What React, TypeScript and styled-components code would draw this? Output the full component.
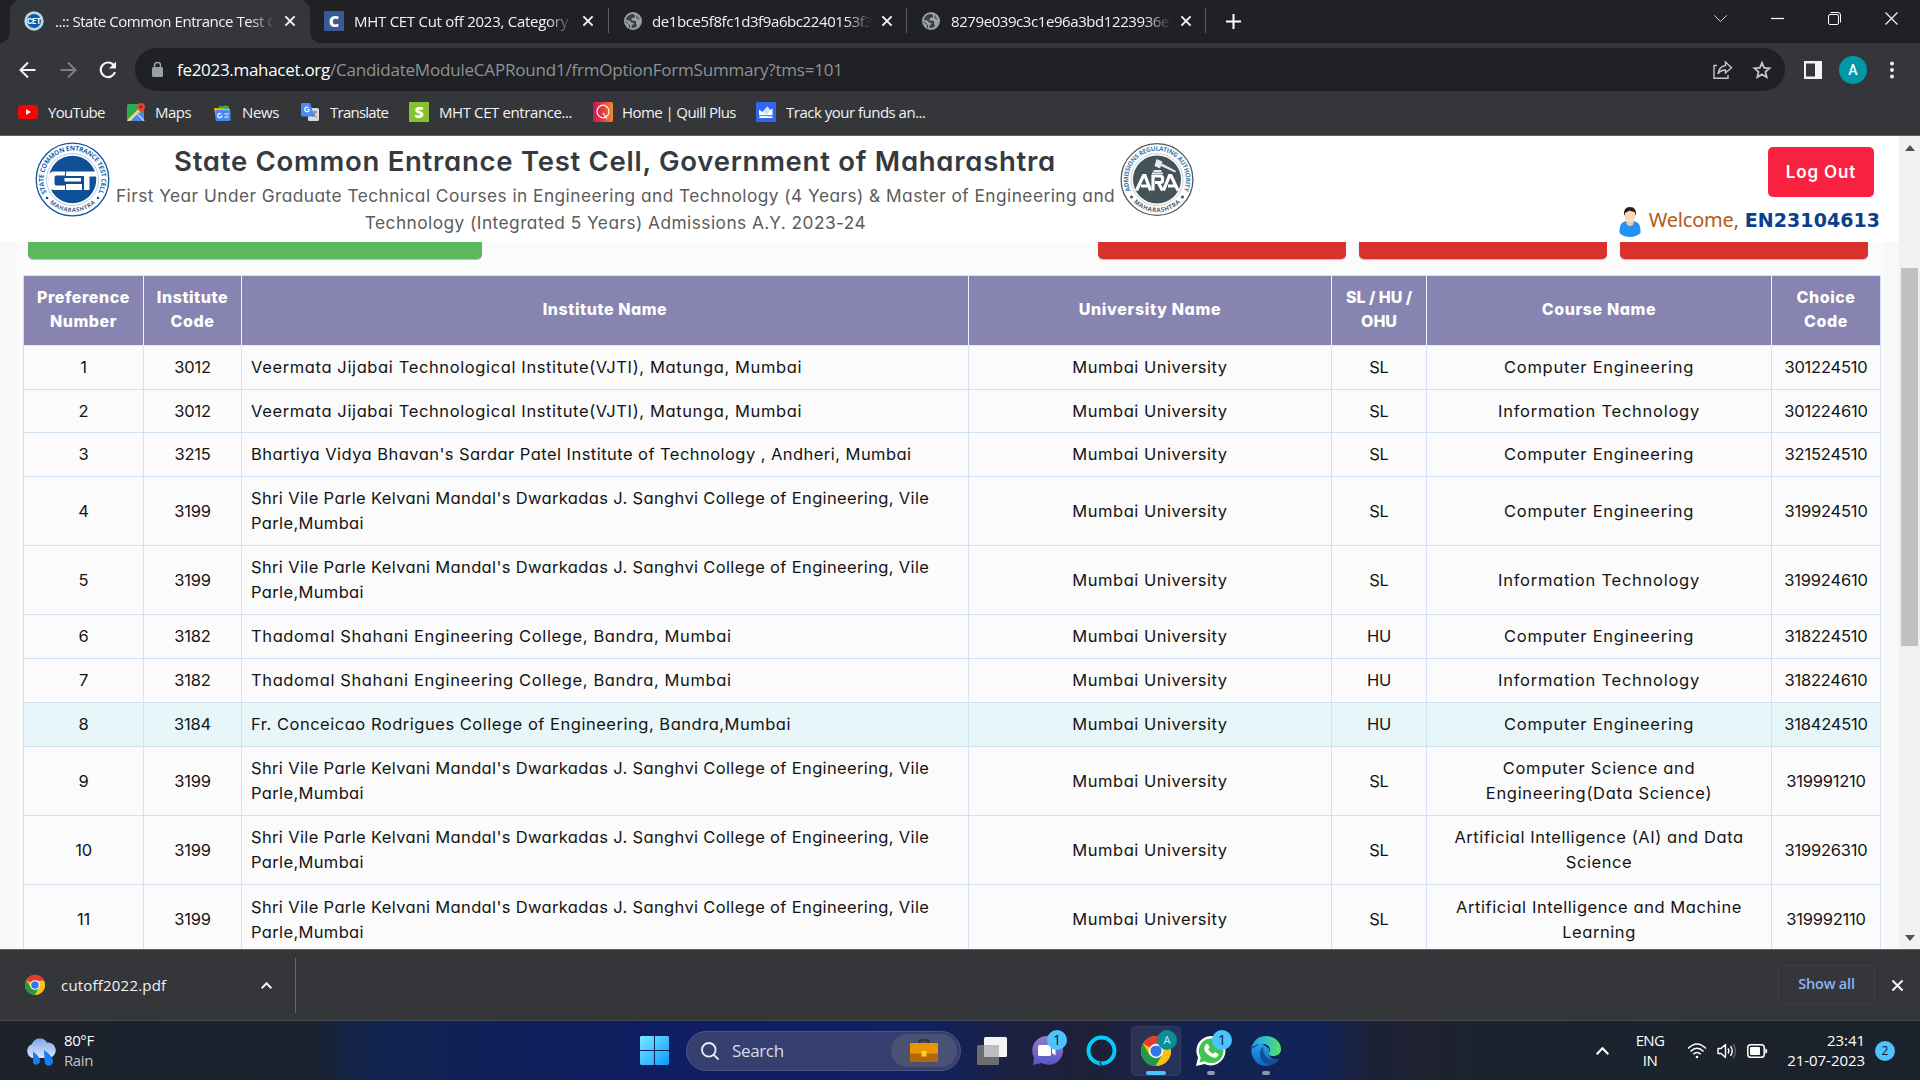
import React from 'react';
import styled, { createGlobalStyle } from 'styled-components';

const UI = '"Open Sans", "Noto Sans", sans-serif';
const PAGE = 'Inter, "Open Sans", sans-serif';

const Global = createGlobalStyle`
  * { box-sizing: border-box; }
  html, body { margin: 0; padding: 0; overflow: hidden; background: #202124; }
  svg { display: block; flex: none; overflow: visible; }
`;

const Screen = styled.div`
  width: 1920px;
  height: 1080px;
  display: flex;
  flex-direction: column;
  overflow: hidden;
  font-family: ${UI};
`;

/* ---------- browser chrome ---------- */

const TabStrip = styled.div`
  height: 43px;
  flex: none;
  display: flex;
  align-items: stretch;
  background: #202124;
  padding-left: 10px;
`;

const Tab = styled.div<{ $active?: boolean; $width: number; $pad: number }>`
  width: ${p => p.$width}px;
  display: flex;
  align-items: center;
  padding: 0 0 2px ${p => p.$pad}px;
  background: ${p => (p.$active ? '#35363a' : 'transparent')};
  border-radius: 10px 10px 0 0;
  position: relative;
`;

const TabFoot = styled.i<{ $side: 'left' | 'right' }>`
  position: absolute;
  bottom: 0;
  ${p => p.$side}: -10px;
  width: 10px;
  height: 10px;
  background: radial-gradient(circle at ${p => (p.$side === 'left' ? '0 0' : '100% 0')}, transparent 9.5px, #35363a 10px);
`;

const TabTitle = styled.span<{ $width: number; $gap: number; $ls: number }>`
  width: ${p => p.$width}px;
  margin-left: ${p => p.$gap}px;
  margin-right: 10px;
  font-size: 15px;
  line-height: 24px;
  letter-spacing: ${p => p.$ls}px;
  color: #f1f3f4;
  white-space: nowrap;
  overflow: hidden;
  mask-image: linear-gradient(90deg, #000 calc(100% - 26px), transparent);
`;

const TabDivider = styled.span<{ $gap: number }>`
  width: 1px;
  height: 25px;
  margin-left: ${p => p.$gap}px;
  background: #5b5d61;
`;

const LetterIcon = styled.span<{ $bg: string; $size: number }>`
  width: ${p => p.$size}px;
  height: 20px;
  flex: none;
  display: flex;
  align-items: center;
  justify-content: center;
  background: ${p => p.$bg};
  color: #fff;
  font-size: 16px;
  font-weight: 800;
  line-height: 20px;
`;

const NewTab = styled.div`
  display: flex;
  align-items: center;
  padding-left: 20px;
`;

const WindowControls = styled.div`
  margin-left: auto;
  display: flex;
  height: 37px;
  align-items: center;
  gap: 44px;
  padding-right: 22px;
`;

const Toolbar = styled.div`
  height: 53px;
  flex: none;
  display: flex;
  align-items: center;
  background: #35363a;
  padding: 0 24px 0 18px;
`;

const NavButtons = styled.div`
  display: flex;
  gap: 20px;
  width: 117px;
`;

const Omnibox = styled.div`
  width: 1650px;
  height: 43px;
  display: flex;
  align-items: center;
  border-radius: 22px;
  background: #202124;
  padding: 0 14px 0 17px;
`;

const Url = styled.div`
  margin-left: 14px;
  font-size: 17px;
  line-height: 26px;
  letter-spacing: -0.2px;
  color: #8f9194;
  white-space: nowrap;
  b { font-weight: 400; color: #fff; letter-spacing: -0.3px; }
`;

const OmniActions = styled.div`
  margin-left: auto;
  display: flex;
  align-items: center;
  gap: 20px;
`;

const ToolbarEnd = styled.div`
  margin-left: 19px;
  display: flex;
  align-items: center;
`;

const Avatar = styled.div`
  width: 28px;
  height: 28px;
  margin: 0 23px 0 17px;
  border-radius: 50%;
  background: #0097a7;
  color: #fff;
  font: 500 14px/28px Roboto, sans-serif;
  text-align: center;
`;

const Bookmarks = styled.div`
  height: 40px;
  flex: none;
  display: flex;
  align-items: center;
  background: #35363a;
  border-bottom: 1px solid #5d5b60;
  padding: 0 0 7px 18px;
`;

const Bookmark = styled.div<{ $width: number; $gap: number; $ls: number }>`
  width: ${p => p.$width}px;
  display: flex;
  align-items: center;
  gap: ${p => p.$gap}px;
  font-size: 15px;
  line-height: 22px;
  letter-spacing: ${p => p.$ls}px;
  color: #f1f3f4;
  white-space: nowrap;
`;

/* ---------- web page ---------- */

const Viewport = styled.div`
  height: 813px;
  flex: none;
  display: flex;
  overflow: hidden;
  background: #f8f8f8;
`;

const Page = styled.div`
  width: 1899px;
  display: flex;
  flex-direction: column;
  font-family: ${PAGE};
  font-feature-settings: 'cv11';
`;

const SiteHeader = styled.header`
  height: 106px;
  flex: none;
  display: flex;
  align-items: flex-start;
  background: #fff;
  padding: 6px 19px 0 35px;
`;

const Headings = styled.div`
  width: 1010px;
  display: flex;
  flex-direction: column;
  align-items: center;
  white-space: nowrap;
`;

const SiteTitle = styled.h1`
  margin: 2px 0 3px;
  font-size: 27.5px;
  line-height: 35px;
  font-weight: 600;
  letter-spacing: 0.73px;
  color: #343a40;
`;

const Subtitle = styled.div<{ $ls: number }>`
  padding-left: 1px;
  font-size: 17.3px;
  line-height: 27px;
  letter-spacing: ${p => p.$ls}px;
  color: #5b5b5b;
`;

const Account = styled.div`
  margin-left: auto;
  display: flex;
  flex-direction: column;
  align-items: flex-end;
`;

const LogOut = styled.button`
  width: 106px;
  height: 50px;
  margin: 5px 6px 0 0;
  padding: 0;
  border: 0;
  border-radius: 5px;
  background: #f8213f;
  color: #fff;
  font: 600 17px/50px ${PAGE};
  font-feature-settings: 'cv11';
  letter-spacing: 0.85px;
`;

const Welcome = styled.div`
  display: flex;
  align-items: center;
  margin-top: 9px;
  height: 32px;
  font-family: "DejaVu Sans", sans-serif;
`;

const WelcomeText = styled.span`
  margin: 0 6px 4px 8px;
  font: 400 20px/28px "Noto Sans", sans-serif;
  letter-spacing: -0.2px;
  color: #b5591a;
`;

const UserId = styled.b`
  margin-bottom: 4px;
  font-size: 19px;
  line-height: 28px;
  letter-spacing: 0.05px;
  color: #0b3f8c;
`;

const Content = styled.main`
  height: 707px;
  margin: 0 15px 0 17px;
  padding: 0 3px 0 6px;
  background: #fbfbfb;
  overflow: hidden;
`;

const Actions = styled.div`
  display: flex;
  height: 33px;
  padding: 0 13px 0 5px;
  gap: 13px;
`;

const Action = styled.div<{ $color: string; $width: number; $push?: boolean }>`
  width: ${p => p.$width}px;
  height: 17px;
  margin-left: ${p => (p.$push ? 'auto' : '0')};
  background: ${p => p.$color};
  border-radius: 0 0 5px 5px;
  box-shadow: 0 1px 1px rgba(90, 100, 150, 0.45);
`;

const Table = styled.div`
  width: 1858px;
  border-left: 1px solid #cde0f1;
  border-top: 1px solid #cde6ee;
`;

const Row = styled.div<{ $height: number; $hover?: boolean }>`
  display: grid;
  grid-template-columns: 120px 98px 727px 363px 95px 345px 109px;
  height: ${p => p.$height}px;
  background: ${p => (p.$hover ? '#e7f7f9' : 'transparent')};
`;

const Cell = styled.div<{ $left?: boolean; $ls?: number }>`
  display: flex;
  align-items: center;
  justify-content: ${p => (p.$left ? 'flex-start' : 'center')};
  text-align: ${p => (p.$left ? 'left' : 'center')};
  padding: 0 ${p => (p.$left ? 9 : 0)}px;
  border-right: 1px solid #d3e3f3;
  border-bottom: 1px solid #cfe0f0;
  font-size: 16.5px;
  line-height: 25px;
  letter-spacing: ${p => p.$ls ?? 0.52}px;
  color: #141414;
  white-space: pre-line;
`;

const HeadCell = styled(Cell)`
  background: #8884b2;
  border-right-color: #eef1fa;
  border-bottom-color: #e6ecf6;
  color: #fff;
  font-size: 16px;
  font-weight: 800;
  line-height: 24px;
  padding-bottom: 3px;
  &:last-child { border-right-color: #cde0f1; }
`;

const ScrollBar = styled.div`
  width: 21px;
  display: flex;
  flex-direction: column;
  align-items: center;
  background: #f1f1f1;
  padding: 9px 0 8px;
`;

const Thumb = styled.div`
  width: 17px;
  height: 378px;
  margin: 117px 0 auto;
  background: #c1c1c1;
`;

const Arrow = styled.i<{ $up?: boolean }>`
  border: 5px solid transparent;
  border-top-width: ${p => (p.$up ? 0 : 6)}px;
  border-bottom-width: ${p => (p.$up ? 6 : 0)}px;
  border-${p => (p.$up ? 'bottom' : 'top')}-color: #505050;
`;

/* ---------- downloads and taskbar ---------- */

const Downloads = styled.div`
  height: 72px;
  flex: none;
  display: flex;
  align-items: center;
  background: #35363a;
  border-top: 1px solid #5f6064;
  border-bottom: 1px solid #46484e;
  padding: 0 17px 0 25px;
`;

const FileName = styled.span`
  width: 200px;
  margin-left: 16px;
  font-size: 15px;
  letter-spacing: 0.2px;
  color: #f1f3f4;
`;

const DownloadDivider = styled.span`
  width: 1px;
  height: 55px;
  margin-left: 23px;
  background: #68696d;
`;

const ShowAll = styled.button`
  width: 97px;
  height: 39px;
  margin: 0 17px 2px auto;
  padding: 0;
  border: 1px solid #3f4044;
  border-radius: 5px;
  background: transparent;
  color: #8ab4f8;
  font: 600 14.5px/36px ${UI};
  letter-spacing: -0.2px;
`;

const Taskbar = styled.div`
  height: 59px;
  flex: none;
  display: flex;
  align-items: center;
  background: linear-gradient(90deg, #1e222b 0, #1a2330 310px, #12244f 370px, #101e5c 540px, #0f1d63 700px,
    #112160 930px, #1c2142 1010px, #1f2038 1090px, #14224f 1180px, #10245a 1310px, #1d2138 1375px, #1f2230 1430px,
    #1a232e 1510px, #1c222b 1920px);
  padding: 0 25px 0 25px;
  color: #fff;
`;

const Weather = styled.div`
  width: 576px;
  margin: 0 0 2px 8px;
  font-size: 15px;
  line-height: 20px;
  letter-spacing: -0.4px;
  span { display: block; color: #c3c6ca; }
`;

const SearchBox = styled.div`
  width: 275px;
  height: 40px;
  margin: 0 16px 0 17px;
  display: flex;
  align-items: center;
  border-radius: 20px;
  background: #353f70;
  border: 1px solid #4b5482;
  padding: 0 3px 0 14px;
  font-size: 17px;
  letter-spacing: -0.35px;
  color: #d9dce6;
`;

const SearchLabel = styled.span`
  margin-left: 13px;
`;

const SearchHighlight = styled.span`
  width: 66px;
  height: 33px;
  margin-left: auto;
  display: flex;
  align-items: center;
  justify-content: center;
  border-radius: 17px;
  background: #4b5173;
`;

const AppSlot = styled.div<{ $open?: boolean }>`
  position: relative;
  width: 50px;
  height: 50px;
  margin-right: 5px;
  flex: none;
  display: flex;
  align-items: center;
  justify-content: center;
  border-radius: 5px;
  background: ${p => (p.$open ? 'rgba(255,255,255,0.08)' : 'transparent')};
  box-shadow: ${p => (p.$open ? 'inset 0 0 0 1px rgba(255,255,255,0.05)' : 'none')};
`;

const Badge = styled.span<{ $bg?: string; $fg?: string }>`
  position: absolute;
  left: 26px;
  top: 4px;
  width: 20px;
  height: 20px;
  border-radius: 50%;
  background: ${p => p.$bg || '#4cc2ff'};
  color: ${p => p.$fg || '#101820'};
  font-size: ${p => (p.$bg ? 11 : 14)}px;
  line-height: 20px;
  text-align: center;
`;

const Running = styled.span<{ $on?: boolean }>`
  position: absolute;
  bottom: 1px;
  width: ${p => (p.$on ? 20 : 8)}px;
  height: 4px;
  border-radius: 2px;
  background: ${p => (p.$on ? '#4cc2ff' : '#9297ab')};
`;

const Tray = styled.div`
  margin-left: auto;
  display: flex;
  align-items: center;
  font-size: 15px;
  line-height: 20px;
`;

const Language = styled.div`
  width: 42px;
  margin: 0 16px 2px 20px;
  text-align: center;
  letter-spacing: -0.6px;
`;

const Clock = styled.div`
  width: 80px;
  margin: 0 10px 2px 17px;
  text-align: right;
  letter-spacing: -0.05px;
  white-space: nowrap;
`;

const Notices = styled.div`
  width: 20px;
  height: 20px;
  border-radius: 50%;
  background: #4cc2ff;
  color: #101820;
  font-size: 12px;
  text-align: center;
`;

/* ---------- drawings ---------- */

const Cross = ({ size = 10, w = 2, color = '#f1f3f4' }: { size?: number; w?: number; color?: string }) => (
  <svg width={size} height={size} viewBox="0 0 10 10" stroke={color} strokeWidth={(w * 10) / size}>
    <path d="M.4.4l9.2 9.2M9.6.4L.4 9.6" />
  </svg>
);

const Globe = () => (
  <svg width="18" height="18" viewBox="0 0 18 18">
    <circle cx="9" cy="9" r="9" fill="#9aa0a6" />
    <path d="M7 2.2C4 3 2.300 5.500 2 8l3.500.5 2 2.200H9.500v1.500L7.500 13.500v2.300C10 16.200 11.500 15.500 13 14l-1-2.500V9L8.500 8.800 7 7l2-1.500h2V3.500L9.500 2z" fill="#3b3d40" />
    <path d="M1.500 9.500l4 3.500v3M13 3.500V6l2.500 1" stroke="#3b3d40" fill="none" />
  </svg>
);

const Chrome = ({ size }: { size: number }) => (
  <svg width={size} height={size} viewBox="0 0 48 48">
    <circle cx="24" cy="24" r="24" fill="#fbc116" />
    <path d="M24 24L3.200 12A24 24 0 0 1 44.800 12z" fill="#e33b2e" />
    <path d="M3.200 12A24 24 0 0 0 24 48l10.400-18H24L13.600 30z" fill="#23994a" />
    <path d="M24 13h21.300A24 24 0 0 1 24 48l9.500-18.500z" fill="#fbc116" />
    <path d="M24 13h21.300L44.800 12 24 11z" fill="#e33b2e" />
    <circle cx="24" cy="24" r="11.500" fill="#fff" />
    <circle cx="24" cy="24" r="9" fill="#3476e8" />
  </svg>
);

const MiniSeal = () => (
  <svg width="20" height="20" viewBox="0 0 20 20">
    <circle cx="10" cy="10" r="9.700" fill="#b7d7ef" />
    <circle cx="10" cy="10" r="7" fill="#1259a4" />
    <text x="10" y="12.600" textAnchor="middle" fontSize="7" fontWeight="800" fill="#fff" fontFamily="Inter">CET</text>
  </svg>
);

const CetSeal = () => (
  <svg width="75" height="75" viewBox="-37.500 -37.500 75 75">
    <circle r="36.300" fill="#fff" stroke="#11539f" strokeWidth="1.300" />
    <circle r="26" fill="none" stroke="#8fb4dc" strokeWidth=".7" />
    <circle r="23.800" fill="#0f4f98" />
    <path id="cetTop" d="M-24.500 15.500A29 29 0 1 1 24.500 15.500" fill="none" />
    <path id="cetBottom" d="M-27.500 17.800A33 33 0 0 0 27.500 17.800" fill="none" />
    <g fontFamily='"Open Sans"' fontWeight="700" fill="#1166b5">
      <text fontSize="6.600"><textPath href="#cetTop" startOffset="50%" textAnchor="middle" textLength="118">STATE COMMON ENTRANCE TEST CELL</textPath></text>
      <text fontSize="5.800" fill="#44658f"><textPath href="#cetBottom" startOffset="50%" textAnchor="middle" textLength="50">MAHARASHTRA</textPath></text>
    </g>
    <circle cx="-25.500" cy="18.500" r="1.300" fill="#11539f" />
    <circle cx="25.500" cy="18.500" r="1.300" fill="#11539f" />
    <g fill="#fff">
      <path d="M-7.500-8v4h-8.500q-2 0-2 2v6q0 2 2 2h8.500v4.500h-10.500q-6 0-6-5.500v-7.500q0-5.500 6-5.500z" />
      <path d="M-6.500-8H24v5h-7v13.500h-5.500V-3.500H-6.500z" />
      <path d="M-8-1.500H8.500v3.500H-8zM-6.500 4.500H9.500v6H-6.500z" />
    </g>
  </svg>
);

const AraSeal = () => (
  <svg width="74" height="75" viewBox="-37 -37.500 74 75">
    <circle r="35.900" fill="#fff" stroke="#4a5960" strokeWidth="1.300" />
    <circle r="26" fill="none" stroke="#b5bcc0" strokeWidth=".7" />
    <circle r="24" fill="#44525a" />
    <path id="araTop" d="M-26 12.500A28.800 28.800 0 1 1 26 12.500" fill="none" />
    <path id="araBottom" d="M-26.500 19A32.600 32.600 0 0 0 26.500 19" fill="none" />
    <g fontFamily='"Open Sans"' fontWeight="700">
      <text fontSize="6.400" fill="#3d7bab"><textPath href="#araTop" startOffset="50%" textAnchor="middle" textLength="113">ADMISSIONS REGULATING AUTHORITY</textPath></text>
      <text fontSize="6.200" fill="#566269"><textPath href="#araBottom" startOffset="50%" textAnchor="middle" textLength="52">MAHARASHTRA</textPath></text>
    </g>
    <circle cx="-25.500" cy="17.500" r="1.500" fill="#44525a" />
    <circle cx="25.500" cy="17.500" r="1.500" fill="#44525a" />
    <g stroke="#fff" fill="none" strokeWidth="3.200">
      <path d="M-20.500 11L-13.500-4h1.500l5.500 15M-16 6.500h7" />
      <path d="M-4 11V-3.500H3.500q2 0 2 2V1q0 2-2 2H-2M1.500 3.500L5.500 11" />
      <path d="M6.500 11L12.500-4h1.500l7 15M11 6.500h7" />
    </g>
    <path d="M-3.500-9.500h8v2h-8zM-5-7h11v1.500H-5zM-.5-20.500l6 2.500-2.500 7L-2.500-13.500zM5-16l14 7.500-1 1.500L4-13.500z" fill="#e6eaec" />
  </svg>
);

const UserIcon = () => (
  <svg width="22" height="30" viewBox="0 0 21 30">
    <path d="M0 23q0-8 7-9h7q7 1 7 9v3q-4 4-10.500 4T0 26z" fill="#2492f5" />
    <path d="M6.500 14h8l-1 4q-3 2-6 0z" fill="#f5c7a2" />
    <ellipse cx="10.500" cy="9" rx="5.300" ry="7" fill="#fbd9b9" />
    <path d="M4.500 9Q3.500 0 10.500 0T16.500 9l-1.500-4q-4-1-5-1.500Q7 5.500 6 5.500z" fill="#2b1d1a" />
  </svg>
);

/* ---------- data ---------- */

type Option = { h: number; code: string; name: string; ls: number; type: string; course: string; cls: number; choice: string };
const sanghvi = "Shri Vile Parle Kelvani Mandal's Dwarkadas J. Sanghvi College of Engineering, Vile\nParle,Mumbai";
const vjti = 'Veermata Jijabai Technological Institute(VJTI), Matunga, Mumbai';
const thadomal = 'Thadomal Shahani Engineering College, Bandra, Mumbai';
const comp = 'Computer Engineering';
const it = 'Information Technology';
const options: Option[] = [
  { h: 44, code: '3012', name: vjti, ls: 0.62, type: 'SL', course: comp, cls: 0.75, choice: '301224510' },
  { h: 43, code: '3012', name: vjti, ls: 0.62, type: 'SL', course: it, cls: 0.75, choice: '301224610' },
  { h: 44, code: '3215', name: "Bhartiya Vidya Bhavan's Sardar Patel Institute of Technology , Andheri, Mumbai", ls: 0.45, type: 'SL', course: comp, cls: 0.75, choice: '321524510' },
  { h: 69, code: '3199', name: sanghvi, ls: 0.35, type: 'SL', course: comp, cls: 0.75, choice: '319924510' },
  { h: 69, code: '3199', name: sanghvi, ls: 0.35, type: 'SL', course: it, cls: 0.75, choice: '319924610' },
  { h: 44, code: '3182', name: thadomal, ls: 0.62, type: 'HU', course: comp, cls: 0.75, choice: '318224510' },
  { h: 44, code: '3182', name: thadomal, ls: 0.62, type: 'HU', course: it, cls: 0.75, choice: '318224610' },
  { h: 44, code: '3184', name: 'Fr. Conceicao Rodrigues College of Engineering, Bandra,Mumbai', ls: 0.52, type: 'HU', course: comp, cls: 0.75, choice: '318424510' },
  { h: 69, code: '3199', name: sanghvi, ls: 0.35, type: 'SL', course: 'Computer Science and\nEngineering(Data Science)', cls: 0.68, choice: '319991210' },
  { h: 69, code: '3199', name: sanghvi, ls: 0.35, type: 'SL', course: 'Artificial Intelligence (AI) and Data\nScience', cls: 0.57, choice: '319926310' },
  { h: 70, code: '3199', name: sanghvi, ls: 0.35, type: 'SL', course: 'Artificial Intelligence and Machine\nLearning', cls: 0.57, choice: '319992110' },
];

export default function App() {
  return (
    <Screen>
      <Global />
      <TabStrip>
        <Tab $active $width={300} $pad={14}>
          <TabFoot $side="left" />
          <MiniSeal />
          <TabTitle $width={220} $gap={11} $ls={-0.45}>..:: State Common Entrance Test Cell</TabTitle>
          <Cross />
          <TabFoot $side="right" />
        </Tab>
        <Tab $width={299} $pad={14}>
          <LetterIcon $bg="#3b5998" $size={20}>C</LetterIcon>
          <TabTitle $width={220} $gap={10} $ls={-0.27}>MHT CET Cut off 2023, Category Wise</TabTitle>
          <Cross />
          <TabDivider $gap={15} />
        </Tab>
        <Tab $width={298} $pad={15}>
          <Globe />
          <TabTitle $width={220} $gap={10} $ls={-0.4}>de1bce5f8fc1d3f9a6bc2240153f3a</TabTitle>
          <Cross />
          <TabDivider $gap={14} />
        </Tab>
        <Tab $width={299} $pad={15}>
          <Globe />
          <TabTitle $width={220} $gap={11} $ls={-0.42}>8279e039c3c1e96a3bd1223936eec</TabTitle>
          <Cross />
          <TabDivider $gap={14} />
        </Tab>
        <NewTab>
          <svg width="15" height="15" viewBox="0 0 15 15" stroke="#fff" strokeWidth="2"><path d="M7.500 0v15M0 7.500h15" /></svg>
        </NewTab>
        <WindowControls>
          <svg width="13" height="7" viewBox="0 0 13 7" stroke="#d5d6d8" fill="none"><path d="M.3.3l6.200 6.200L12.700.3" /></svg>
          <svg width="13" height="13" viewBox="0 0 13 13" stroke="#fff" strokeWidth="1.200"><path d="M0 6.500h13" /></svg>
          <svg width="13" height="13" viewBox="0 0 13 13" stroke="#fff" fill="none"><rect x=".5" y="2.500" width="10" height="10" rx="1.500" /><path d="M2.500.5H10q2.500 0 2.500 2.500v7.500" /></svg>
          <Cross size={13} w={1.2} />
        </WindowControls>
      </TabStrip>

      <Toolbar>
        <NavButtons>
          <svg width="20" height="20" viewBox="0 0 20 20" stroke="#f1f3f4" strokeWidth="2" fill="none"><path d="M17.500 10H2.500M10 2.500L2.500 10l7.500 7.500" /></svg>
          <svg width="20" height="20" viewBox="0 0 20 20" stroke="#7c7e82" strokeWidth="2" fill="none"><path d="M2.500 10h15M10 2.500l7.500 7.500-7.500 7.500" /></svg>
          <svg width="20" height="20" viewBox="0 0 20 20" stroke="#f1f3f4" strokeWidth="2.200" fill="none"><path d="M16 5.600A7.300 7.300 0 1 0 17 12" /><path d="M18 1.500v7H11z" fill="#f1f3f4" stroke="none" /></svg>
        </NavButtons>
        <Omnibox>
          <svg width="11" height="15" viewBox="0 0 11 15"><rect y="5" width="11" height="10" rx="1.500" fill="#9aa0a6" /><path d="M2.500 6V3.500a3 3 0 0 1 6 0V6" stroke="#9aa0a6" strokeWidth="1.500" fill="none" /></svg>
          <Url><b>fe2023.mahacet.org</b>/CandidateModuleCAPRound1/frmOptionFormSummary?tms=101</Url>
          <OmniActions>
            <svg width="20" height="18" viewBox="0 0 20 18" stroke="#c4c7c9" strokeWidth="1.400" fill="none"><path d="M4 4.500H1v12.700h14V14" /><path d="M12.500 1l6 5.800-6 5.200V9q-5 0-7.500 4Q6 5.500 12.500 4.500z" /></svg>
            <svg width="18" height="18" viewBox="0 0 18 18" stroke="#c4c7c9" strokeWidth="1.800" fill="none"><path d="M9 1.800l2.200 5 5.400.5-4.100 3.600 1.200 5.300L9 13.400l-4.700 2.800 1.200-5.300L1.400 7.300l5.400-.5z" /></svg>
          </OmniActions>
        </Omnibox>
        <ToolbarEnd>
          <svg width="18" height="18" viewBox="0 0 18 18"><path d="M0 0h18v18H0zM2 2.500v13h9v-13z" fill="#f1f3f4" fillRule="evenodd" /></svg>
          <Avatar>A</Avatar>
          <svg width="4" height="18" viewBox="0 0 4 18" fill="#f1f3f4"><circle cx="2" cy="2.500" r="1.900" /><circle cx="2" cy="9" r="1.900" /><circle cx="2" cy="15.500" r="1.900" /></svg>
        </ToolbarEnd>
      </Toolbar>

      <Bookmarks>
        <Bookmark $width={109} $gap={10} $ls={-0.7}>
          <svg width="20" height="14" viewBox="0 0 20 14"><rect width="20" height="14" rx="3.500" fill="#f00" /><path d="M8 4l5 3-5 3z" fill="#fff" /></svg>
          YouTube
        </Bookmark>
        <Bookmark $width={87} $gap={10} $ls={-0.5}>
          <svg width="18" height="18" viewBox="0 0 18 18"><rect width="17" height="17" y="1" rx="1.500" fill="#2da94f" /><path d="M0 18L12 6l5.500 12z" fill="#f3f3f3" /><path d="M9.500 9.500L17 17v-7z" fill="#4a8af4" /><path d="M3 18l7-7 6.500 7z" fill="#4a8af4" /><path d="M1 17.500L12 6.500" stroke="#fbd24d" strokeWidth="1.800" /><path d="M14 0a4 4 0 0 0-4 4c0 3 4 4 4 8 0-4 4-5 4-8a4 4 0 0 0-4-4z" fill="#e94335" /><circle cx="14" cy="4" r="1.400" fill="#8c1d18" /></svg>
          Maps
        </Bookmark>
        <Bookmark $width={87} $gap={10} $ls={-0.4}>
          <svg width="18" height="17" viewBox="0 0 18 17"><path d="M3 4.500L12 1l2 6H4z" fill="#e94335" /><path d="M5 2h10v8H5z" fill="#34a853" /><path d="M0 4l16 1v8H2z" fill="#fbbc04" /><rect x="1.500" y="6" width="15" height="11" rx="1.500" fill="#4a8af4" /><path d="M7.800 11.500a2 2 0 1 1-.8-1.500M10.500 10h4M10.500 13h4" stroke="#fff" strokeWidth="1.200" fill="none" /></svg>
          News
        </Bookmark>
        <Bookmark $width={108} $gap={11} $ls={-0.75}>
          <svg width="18" height="18" viewBox="0 0 18 18"><rect x="7" y="5" width="11" height="13" rx="1.500" fill="#d6d9dd" /><path d="M1.500 0H9l4.500 13.500h-12Q0 13.500 0 12V1.500Q0 0 1.500 0z" fill="#4a8af4" /><path d="M8.500 6.500H6M8.300 6.700a2.300 2.300 0 1 1-.8-2" stroke="#fff" strokeWidth="1.200" fill="none" /><path d="M11.500 9H16M14 8v1.500q-.5 3-2.500 4M12.500 11l3 3.500" stroke="#70757a" fill="none" /></svg>
          Translate
        </Bookmark>
        <Bookmark $width={184} $gap={10} $ls={-0.4}>
          <LetterIcon $bg="#84c232" $size={20}>S</LetterIcon>
          MHT CET entrance...
        </Bookmark>
        <Bookmark $width={163} $gap={9} $ls={-0.58}>
          <svg width="20" height="20" viewBox="0 0 20 20"><defs><linearGradient id="quill"><stop offset="0" stopColor="#c2185b" /><stop offset=".5" stopColor="#e2403d" /><stop offset="1" stopColor="#f58a32" /></linearGradient></defs><rect width="20" height="20" rx="2" fill="url(#quill)" /><ellipse cx="10" cy="9.500" rx="6" ry="6.300" fill="none" stroke="#fff" strokeWidth="1.200" /><path d="M10 11l4 6" stroke="#fff" strokeWidth="1.200" /></svg>
          Home | Quill Plus
        </Bookmark>
        <Bookmark $width={180} $gap={10} $ls={-0.5}>
          <svg width="20" height="20" viewBox="0 0 20 20"><rect width="20" height="20" rx="1.500" fill="#3067f0" /><path d="M3 7.500l3.500 2.500L11.500 4.500 14 8l2.500-1.500v6.800H3zM4 14l12.500.5V16H3z" fill="#fff" /><path d="M11.500 4.500L14 8l-3 5.300L6.500 10z" fill="#d5e0fc" /></svg>
          Track your funds an...
        </Bookmark>
      </Bookmarks>

      <Viewport>
        <Page>
          <SiteHeader>
            <CetSeal />
            <Headings>
              <SiteTitle>State Common Entrance Test Cell, Government of Maharashtra</SiteTitle>
              <Subtitle $ls={0.46}>First Year Under Graduate Technical Courses in Engineering and Technology (4 Years) &amp; Master of Engineering and</Subtitle>
              <Subtitle $ls={0.46}>Technology (Integrated 5 Years) Admissions A.Y. 2023-24</Subtitle>
            </Headings>
            <AraSeal />
            <Account>
              <LogOut>Log Out</LogOut>
              <Welcome>
                <UserIcon />
                <WelcomeText>Welcome,</WelcomeText>
                <UserId>EN23104613</UserId>
              </Welcome>
            </Account>
          </SiteHeader>
          <Content>
            <Actions>
              <Action $color="#5cb85c" $width={454} />
              <Action $color="#d9322d" $width={248} $push />
              <Action $color="#d9322d" $width={248} />
              <Action $color="#d9322d" $width={248} />
            </Actions>
            <Table>
              <Row $height={70}>
                <HeadCell $ls={0.55}>{'Preference\nNumber'}</HeadCell>
                <HeadCell $ls={0.55}>{'Institute\nCode'}</HeadCell>
                <HeadCell $ls={0.55}>Institute Name</HeadCell>
                <HeadCell $ls={0.65}>University Name</HeadCell>
                <HeadCell $ls={-0.05}>{'SL / HU /\nOHU'}</HeadCell>
                <HeadCell $ls={0.6}>Course Name</HeadCell>
                <HeadCell $ls={0.55}>{'Choice\nCode'}</HeadCell>
              </Row>
              {options.map((o, i) => (
                <Row key={i} $height={o.h} $hover={i === 7}>
                  <Cell $ls={-0.2}>{i + 1}</Cell>
                  <Cell $ls={-0.2}>{o.code}</Cell>
                  <Cell $left $ls={o.ls}>{o.name}</Cell>
                  <Cell>Mumbai University</Cell>
                  <Cell $ls={-0.3}>{o.type}</Cell>
                  <Cell $ls={o.cls}>{o.course}</Cell>
                  <Cell $ls={-0.2}>{o.choice}</Cell>
                </Row>
              ))}
            </Table>
          </Content>
        </Page>
        <ScrollBar>
          <Arrow $up />
          <Thumb />
          <Arrow />
        </ScrollBar>
      </Viewport>

      <Downloads>
        <Chrome size={20} />
        <FileName>cutoff2022.pdf</FileName>
        <svg width="11" height="7" viewBox="0 0 11 7" stroke="#f1f3f4" strokeWidth="2" fill="none"><path d="M.7 6.300l4.800-5 4.800 5" /></svg>
        <DownloadDivider />
        <ShowAll>Show all</ShowAll>
        <Cross size={11} />
      </Downloads>

      <Taskbar>
        <svg width="31" height="32" viewBox="0 0 31 32">
          <defs><linearGradient id="cloud" x2="0" y2="1"><stop offset="0" stopColor="#7fa6ee" /><stop offset="1" stopColor="#dce6fb" /></linearGradient></defs>
          <path d="M7 23a7.500 7.500 0 0 1 0-14A8.300 8.300 0 0 1 22 7.500 7.800 7.800 0 0 1 24 23z" fill="url(#cloud)" />
          <path d="M8 16.500q7 5 7 9.500a3.800 3.800 0 0 1-7 2zM19 15q9 6 9 11.500a4.200 4.200 0 0 1-8.500 0z" fill="#1a7df5" />
        </svg>
        <Weather>80°F<span>Rain</span></Weather>
        <svg width="29" height="29" viewBox="0 0 29 29">
          <defs><linearGradient id="win" x2="1" y2="1"><stop offset="0" stopColor="#7be9ff" /><stop offset="1" stopColor="#0a9bff" /></linearGradient></defs>
          <path d="M1 0h13v14H0V1zM15 0h13l1 1v13H15zM0 15h14v14H1l-1-1zM15 15h14v13l-1 1H15z" fill="url(#win)" />
        </svg>
        <SearchBox>
          <svg width="18" height="18" viewBox="0 0 18 18" stroke="#eceef5" strokeWidth="1.800" fill="none"><circle cx="7.800" cy="7.800" r="6.800" /><path d="M12.600 12.600L17.500 17.500" /></svg>
          <SearchLabel>Search</SearchLabel>
          <SearchHighlight>
            <svg width="28" height="24" viewBox="0 0 28 24"><path d="M9.500 5V2.500Q9.500 1.200 11 1.200h6q1.500 0 1.500 1.300V5" stroke="#33353b" strokeWidth="2.400" fill="none" /><rect y="4" width="28" height="19" rx="1.200" fill="#b26a08" /><path d="M0 5q0-1 1-1h26q1 0 1 1v9.500H0z" fill="#ec9408" /><rect x="11.500" y="12" width="5" height="5.500" fill="#ffd21f" /></svg>
          </SearchHighlight>
        </SearchBox>
        <svg width="30" height="28" viewBox="0 0 30 28">
          <rect y="8" width="22" height="20" rx="1.500" fill="#6d6d70" />
          <rect x="7" width="23" height="20" rx="1.500" fill="#f4f4f5" />
          <path d="M7 8h15v12H7z" fill="#bdbdc0" />
        </svg>
        <svg width="14" height="1" />
        <AppSlot>
          <svg width="29" height="29" viewBox="0 0 29 29"><defs><linearGradient id="chat" x2="0" y2="1"><stop offset="0" stopColor="#9a7bc0" /><stop offset="1" stopColor="#5158c8" /></linearGradient></defs><path d="M14.500 0a14.500 14.500 0 1 1-5 27L1 29l1-7.500A14.500 14.500 0 0 1 14.500 0z" fill="url(#chat)" /><rect x="6" y="9" width="13" height="11" rx="1.500" fill="#fff" /><path d="M20 12l3.500-2.500v10L20 17z" fill="#fff" /></svg>
          <Badge>1</Badge>
        </AppSlot>
        <AppSlot>
          <svg width="31" height="31" viewBox="0 0 31 31"><circle cx="15.500" cy="15.500" r="13" fill="none" stroke="#00cdfb" strokeWidth="4" /><path d="M5 23Q12 26 14.500 31" fill="none" stroke="#00cdfb" strokeWidth="1.500" /><path d="M14 27l1.500 4.500" stroke="#1d2140" strokeWidth="1.200" /></svg>
        </AppSlot>
        <AppSlot $open>
          <Chrome size={30} />
          <Badge $bg="#0b8f96" $fg="#cfe9ea">A</Badge>
          <Running $on />
        </AppSlot>
        <AppSlot>
          <svg width="30" height="30" viewBox="0 0 30 30"><path d="M15 0A14.700 14.700 0 1 1 8.500 28L0 30l2-8.500A14.700 14.700 0 0 1 15 0z" fill="#fff" /><path d="M15 2.500A12.300 12.300 0 1 1 8.800 25.300L3.500 26.500 4.800 21.500A12.300 12.300 0 0 1 15 2.500z" fill="#3fc351" /><path d="M10.500 8q1-.7 1.700.3l1.300 2.700q.2.800-1.300 2.300 1.500 3 4.800 4.500 1.500-1.800 2.200-1.500l3 1.500q1 1.200-1 3.200-3 2-8-1.500t-5-7.500q.5-3 2.300-4z" fill="#fff" /></svg>
          <Badge>1</Badge>
          <Running />
        </AppSlot>
        <AppSlot>
          <svg width="30" height="30" viewBox="0 0 30 30">
            <defs>
              <linearGradient id="edgeTop"><stop offset="0" stopColor="#1f9de0" /><stop offset=".5" stopColor="#2fc3c9" /><stop offset="1" stopColor="#5be05a" /></linearGradient>
              <linearGradient id="edgeLeft" x2="0" y2="1"><stop offset="0" stopColor="#28a5e8" /><stop offset="1" stopColor="#0d62c0" /></linearGradient>
            </defs>
            <path d="M.3 13C0 22 6 30 15 30c6 0 10.500-3 12.500-7-6 2-12-3-9-10L10 7z" fill="url(#edgeLeft)" />
            <path d="M.3 13C1.500 4.500 8 0 15 0c9 0 15 6.500 15 13 0 5-4 7-7.500 7-4 0-5-1.500-5-2.500s1.500-1.500 1.500-4c0-3-3-5.500-7-5.500C6.500 8 1.500 10 .3 13z" fill="url(#edgeTop)" />
            <path d="M12.500 10.500C8 14 8 20 11 24.500s8 5.500 11 3.500c3-1.500 5-4 5.500-5.500-2 1-4.500 1.500-7 1.200C15 23 11 17 12.500 10.500z" fill="#10509a" />
          </svg>
          <Running />
        </AppSlot>
        <Tray>
          <svg width="13" height="8" viewBox="0 0 13 8" stroke="#fff" strokeWidth="2" fill="none"><path d="M.7 7.300l5.800-6 5.800 6" /></svg>
          <Language>ENG<br />IN</Language>
          <svg width="20" height="16" viewBox="0 0 20 16" stroke="#fff" strokeWidth="1.500" fill="none"><path d="M1 5.500q9-9 18 0M3.500 8.500q6.500-6.500 13 0M6.200 11.300q3.800-3.600 7.600 0" /><circle cx="10" cy="14" r="1.300" fill="#fff" stroke="none" /></svg>
          <svg width="10" height="1" />
          <svg width="20" height="16" viewBox="0 0 20 16" stroke="#fff" strokeWidth="1.400" fill="none"><path d="M1 5.500h3L8.500 1.500v13L4 10.500H1z" strokeLinejoin="round" /><path d="M11 5.500q1.800 2.500 0 5M13.500 3.200q3.500 4.800 0 9.600" /><path d="M16.200 1q4.500 7 0 14" stroke="#5a6069" /></svg>
          <svg width="10" height="1" />
          <svg width="21" height="14" viewBox="0 0 21 14"><rect x=".8" y=".8" width="16.400" height="12.400" rx="2.800" stroke="#fff" strokeWidth="1.500" fill="none" /><rect x="3" y="3" width="10" height="8" rx="1" fill="#fff" /><path d="M18.300 4.500q2 0 2 2.500t-2 2.500z" fill="#fff" /></svg>
          <Clock>23:41<br />21-07-2023</Clock>
          <Notices>2</Notices>
        </Tray>
      </Taskbar>
    </Screen>
  );
}
